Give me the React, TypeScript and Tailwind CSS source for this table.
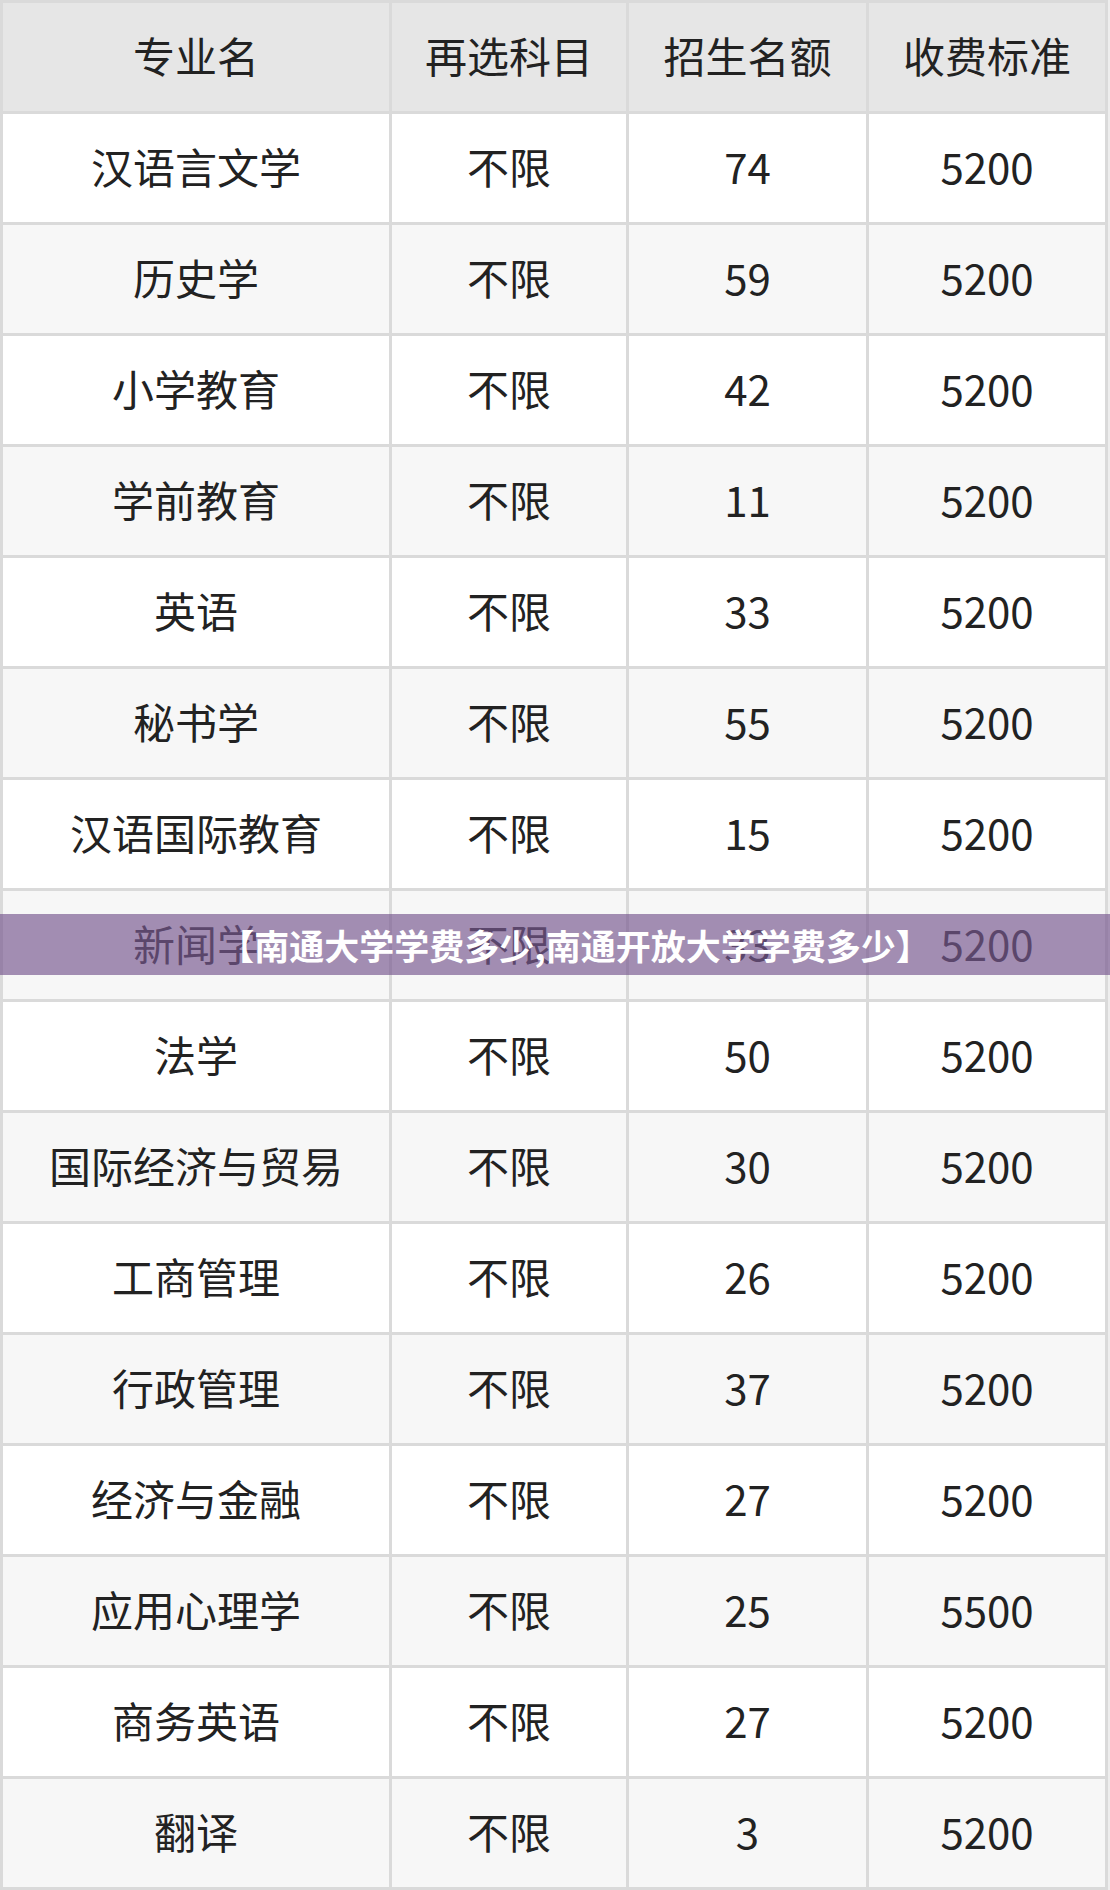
import React from "react";

const rows: [string, string, string, string][] = [
  ["汉语言文学", "不限", "74", "5200"],
  ["历史学", "不限", "59", "5200"],
  ["小学教育", "不限", "42", "5200"],
  ["学前教育", "不限", "11", "5200"],
  ["英语", "不限", "33", "5200"],
  ["秘书学", "不限", "55", "5200"],
  ["汉语国际教育", "不限", "15", "5200"],
  ["新闻学", "不限", "33", "5200"],
  ["法学", "不限", "50", "5200"],
  ["国际经济与贸易", "不限", "30", "5200"],
  ["工商管理", "不限", "26", "5200"],
  ["行政管理", "不限", "37", "5200"],
  ["经济与金融", "不限", "27", "5200"],
  ["应用心理学", "不限", "25", "5500"],
  ["商务英语", "不限", "27", "5200"],
  ["翻译", "不限", "3", "5200"],
];

const header = ["专业名", "再选科目", "招生名额", "收费标准"];
const widths = ["w-[389px]", "w-[237px]", "w-[240px]", "w-[239px]"];

function Row({ cells, bg }: { cells: string[]; bg: string }) {
  return (
    <div className={`flex h-[111px] ${bg}`}>
      {cells.map((c, i) => (
        <div
          key={i}
          className={`${widths[i]} shrink-0 flex items-center justify-center pb-[4px] border-r-[3px] border-b-[3px] border-[#dadada] text-[42px] leading-none text-[#222222]`}
        >
          {c}
        </div>
      ))}
    </div>
  );
}

export default function App() {
  return (
    <div
      className="relative w-[1110px] h-[1890px] bg-[#eeeeee] overflow-hidden"
      style={{ fontFamily: '"Noto Sans CJK SC", "Noto Sans", sans-serif' }}
    >
      <div className="w-[1108px] border-l-[3px] border-t-[3px] border-[#dadada]">
        <Row cells={header} bg="bg-[#e6e6e6]" />
        {rows.map((r, i) => (
          <Row key={i} cells={r} bg={i % 2 === 0 ? "bg-white" : "bg-[#f7f7f7]"} />
        ))}
      </div>
      <div className="absolute left-0 top-[914px] w-[1110px] h-[61px] bg-[rgba(119,88,143,0.67)] flex items-center justify-center pl-[40px]">
        <span className="text-white font-bold text-[35px] leading-none">
          【南通大学学费多少,南通开放大学学费多少】
        </span>
      </div>
    </div>
  );
}
